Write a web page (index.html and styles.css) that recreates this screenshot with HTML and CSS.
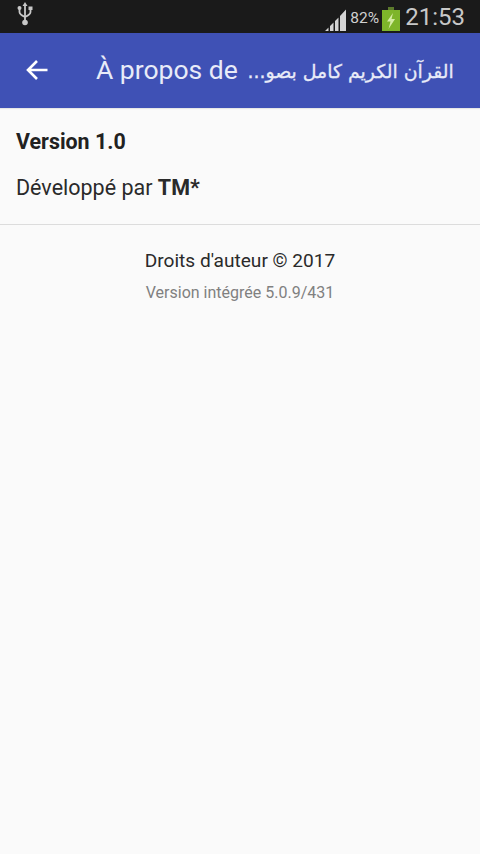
FILE: index.html
```html
<!DOCTYPE html>
<html lang="fr">
<head>
<meta charset="utf-8">
<title>À propos</title>
<link rel="stylesheet" href="styles.css">
</head>
<body>
<div class="status">
  <svg class="usb" viewBox="0 0 16 24" width="16" height="24"><g fill="none" stroke="#c8c8c8" stroke-width="1.800"><path d="M8 4v15"/><path d="M2.500 7v3c0 2.500 2 3.500 5.500 5M13.500 7v3c0 2.500-2 3.500-5.500 5"/></g><path d="M8 0l2.500 4h-5z" fill="#c8c8c8"/><circle cx="2.500" cy="6" r="2" fill="#c8c8c8"/><path d="M11.500 4.500h4v3.500h-4z" fill="#c8c8c8"/><circle cx="8" cy="20.500" r="2.800" fill="#c8c8c8"/></svg>
  <div class="status-right">
    <svg class="signal" viewBox="0 0 22 22" width="22" height="22"><path d="M0 22l3.500-3.500V22zM5 22v-5l3.500-3.500V22zM10 22V12l3.500-3.500V22zM15 22V7l6-6.500V22z" fill="#d4d4d4"/></svg>
    <span class="pct">82%</span>
    <svg class="batt" viewBox="0 0 18 24" width="18" height="24"><path d="M6 0h6v3H6z" fill="#5c7a2c"/><path d="M0 3h18v21H0z" fill="#7eb52a"/><path d="M11 6L5 14.500h3.500L6.500 22 13 12H9.500z" fill="#d6edA6"/></svg>
    <span class="time">21:53</span>
  </div>
</div>
<header class="bar">
  <svg class="back" viewBox="0 0 24 24" width="24" height="24"><path d="M22.500 12H3M12 3l-9 9 9 9" fill="none" stroke="#fff" stroke-width="2.600"/></svg>
  <h1 class="title">À propos de <span class="ar">القرآن الكريم كامل بصو...&rlm;</span></h1>
</header>
<main class="content">
  <section class="info">
    <p class="version">Version 1.0</p>
    <p class="dev">Développé par <b>TM*</b></p>
  </section>
  <section class="legal">
    <p class="copy">Droits d'auteur © 2017</p>
    <p class="build">Version intégrée 5.0.9/431</p>
  </section>
</main>
</body>
</html>
```
FILE: styles.css
```css
html, body { margin: 0; padding: 0; }
body { width: 480px; height: 854px; background: #fafafa; font-family: Roboto, sans-serif; overflow: hidden; display: flex; flex-direction: column; }
p, h1 { margin: 0; font-weight: 400; }
.status { height: 33px; background: #1a1a1a; display: flex; align-items: center; justify-content: space-between; padding: 0 15px 0 17px; box-sizing: border-box; flex: none; }
.usb { margin-top: -5px; }
.status-right { display: flex; align-items: center; }
.signal { margin: 7px 3px 0 0; }
.pct { font-size: 15.500px; color: #d0d0d0; width: 30px; margin-top: 2px; }
.batt { margin: 5px 5px 0 2px; }
.time { font-size: 24px; color: #c8c8c8; }
.bar { height: 75px; background: #3f51b5; display: flex; align-items: center; padding: 0 0 2px 25px; box-sizing: border-box; flex: none; box-shadow: 0 1px 1px rgba(0,0,0,.08); }
.back { flex: none; margin-right: 47px; }
.title { font-size: 26.500px; color: #e8ebf8; white-space: nowrap; }
.ar { font-family: "DejaVu Sans", sans-serif; font-size: 18.900px; vertical-align: 1px; margin-left: 3px; -webkit-text-stroke: .3px #e8ebf8; }
.content { flex: 1; display: flex; flex-direction: column; }
.info { padding: 22px 16px 0; height: 117px; box-sizing: border-box; border-bottom: 1px solid #dcdcdc; }
.version { font-size: 21.400px; font-weight: 700; color: #212121; line-height: 24px; }
.dev { font-size: 21.500px; color: #2a2a2a; line-height: 24px; margin-top: 22px; }
.dev b { font-weight: 700; }
.legal { text-align: center; padding-top: 24px; }
.copy { font-size: 19.100px; color: #2a2a2a; line-height: 24px; }
.build { font-size: 16px; color: #808080; line-height: 20px; margin-top: 10px; }
```
